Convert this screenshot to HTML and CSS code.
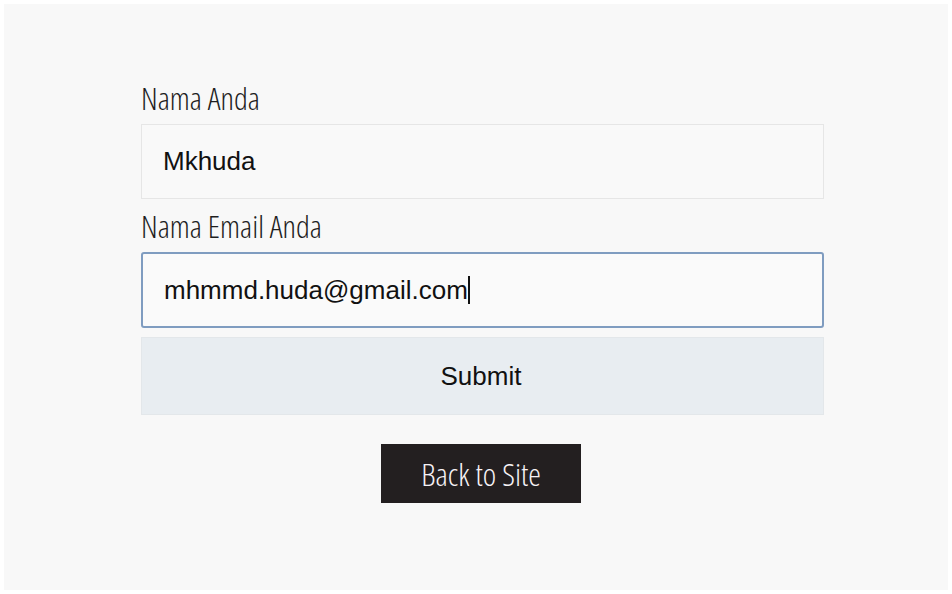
FILE: index.html
```html
<!DOCTYPE html>
<html>
<head>
<meta charset="utf-8">
<link rel="stylesheet" href="styles.css">
</head>
<body>
<div class="panel">
  <form class="form">
    <label class="label">Nama Anda</label>
    <div class="field">Mkhuda</div>
    <label class="label label-second">Nama Email Anda</label>
    <div class="field field-focus">mhmmd.huda@gmail.com<span class="caret"></span></div>
    <div class="submit">Submit</div>
    <div class="back-row"><span class="back">Back to Site</span></div>
  </form>
</div>
</body>
</html>
```
FILE: styles.css
```css
* { box-sizing: border-box; }
html, body { margin: 0; padding: 0; background: #ffffff; }
.panel {
  margin: 4px;
  height: 586px;
  background: #f8f8f8;
  padding: 76px 0 0 137px;
}
.form {
  width: 683px;
  display: flex;
  flex-direction: column;
}
.label {
  font-family: "Open Sans", sans-serif;
  font-weight: 300;
  font-stretch: 75%;
  font-size: 31.5px;
  line-height: 36px;
  color: #1e1e1e;
  margin-bottom: 8px;
}
.label-second { margin-top: 9px; }
.field {
  height: 75px;
  border: 1px solid #e6e6e6;
  background: #f9f9f9;
  font-family: "Liberation Sans", Arial, sans-serif;
  font-size: 26px;
  color: #111;
  display: flex;
  align-items: center;
  padding-left: 21px;
}
.field-focus {
  height: 76px;
  border: 2px solid #7f9cc0;
  border-radius: 3px;
  background: #fafafa;
  padding-left: 21px;
}
.caret {
  display: inline-block;
  width: 2px;
  height: 28px;
  background: #111;
  margin-left: 0;
}
.submit {
  margin-top: 9px;
  height: 78px;
  background: #e8edf1;
  border: 1px solid #e3e7ea;
  font-family: "Liberation Sans", Arial, sans-serif;
  font-size: 26px;
  color: #111;
  display: flex;
  align-items: center;
  justify-content: center;
  padding-right: 3px;
}
.back-row {
  margin-top: 29px;
  display: flex;
  justify-content: center;
  padding-right: 3px;
}
.back {
  width: 200px;
  height: 59px;
  background: #231f20;
  color: #f6f2f6;
  font-family: "Open Sans", sans-serif;
  font-weight: 300;
  font-stretch: 75%;
  font-size: 32px;
  display: flex;
  align-items: center;
  justify-content: center;
}
```
